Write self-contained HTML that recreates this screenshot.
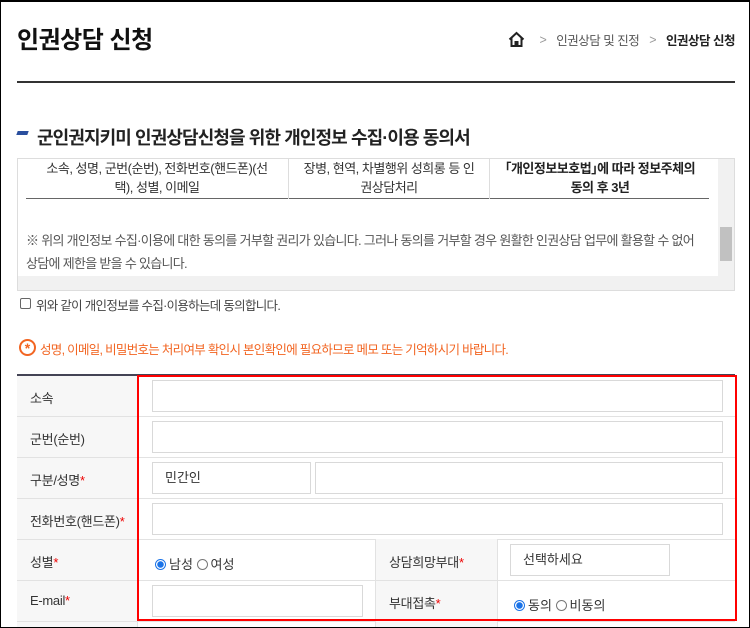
<!DOCTYPE html>
<html><head><meta charset="utf-8"><style>
*{margin:0;padding:0;box-sizing:border-box}
body{width:750px;height:628px;overflow:hidden;background:#fff;font-family:"Liberation Sans","Noto Sans CJK KR",sans-serif;color:#333;position:relative}
.a{position:absolute;white-space:nowrap}
.frame{position:absolute;left:0;top:0;width:750px;height:628px;border:1px solid #000;border-top-width:2px;pointer-events:none;z-index:9}
.inp{position:absolute;border:1px solid #d9d9d9;background:#fff;height:32px;font-size:13px;line-height:30px;padding-left:12px;color:#333}
.lab{position:absolute;left:30px;font-size:13px;color:#333;letter-spacing:-0.3px}
.req{color:#e00}
.row{position:absolute;left:17px;width:718px;border-bottom:1px solid #e2e2e2}
.rad{display:inline-block;width:11px;height:11px;border:1px solid #777;border-radius:50%;vertical-align:-1px;margin-right:3px;background:#fff}
.rad.on{border-color:#1a73e8;background:radial-gradient(circle,#1a73e8 0 3px,#fff 3.5px)}
.sc{letter-spacing:-0.5px}
</style></head><body>
<div class="frame"></div>
<div class="a" style="left:17px;top:20px;font-size:24px;font-weight:bold;color:#111;letter-spacing:-0.5px">인권상담 신청</div>
<div class="a" style="right:15px;top:30px;font-size:12.5px;letter-spacing:-0.5px;display:flex;align-items:center;gap:0">
<svg width="17" height="17" viewBox="0 0 17 17" style="margin-right:14px"><path d="M1.5 8.5 8.5 2l7 6.5M3.5 7v8h4v-4h2v4h4V7" fill="none" stroke="#222" stroke-width="2"/></svg>
<span style="color:#999;margin-right:10px">&gt;</span><span style="color:#555;margin-right:10px">인권상담 및 진정</span><span style="color:#999;margin-right:10px">&gt;</span><span style="color:#222;font-weight:bold">인권상담 신청</span></div>
<div class="a" style="left:17px;top:81px;width:718px;height:2px;background:#333"></div>

<div class="a" style="left:17px;top:131px;width:11px;height:4px;background:#2a4f9e;transform:skewX(-20deg)"></div>
<div class="a" style="left:37px;top:124px;font-size:18px;color:#222;font-weight:bold;letter-spacing:-0.9px">군인권지키미 인권상담신청을 위한 개인정보 수집·이용 동의서</div>

<div class="a sc" style="left:17px;top:158px;width:718px;height:133px;border:1px solid #ddd;overflow:hidden">
 <div class="a" style="left:8px;top:0;width:683px;height:40px;border-bottom:1px solid #666"></div>
 <div class="a" style="left:270px;top:0;width:1px;height:40px;background:#ddd"></div>
 <div class="a" style="left:471px;top:0;width:1px;height:40px;background:#ddd"></div>
 <div class="a" style="left:8px;top:0;width:262px;text-align:center;font-size:13px;line-height:19px;white-space:normal">소속, 성명, 군번(순번), 전화번호(핸드폰)(선<br>택), 성별, 이메일</div>
 <div class="a" style="left:271px;top:0;width:200px;text-align:center;font-size:13px;line-height:19px">장병, 현역, 차별행위 성희롱 등 인<br>권상담처리</div>
 <div class="a" style="left:472px;top:0;width:220px;text-align:center;font-size:13px;line-height:19px;font-weight:bold;color:#222">｢개인정보보호법｣에 따라 정보주체의<br>동의 후 3년</div>
 <div class="a" style="left:8px;top:70px;font-size:13px;line-height:23px;color:#555;letter-spacing:-0.7px">※ 위의 개인정보 수집·이용에 대한 동의를 거부할 권리가 있습니다. 그러나 동의를 거부할 경우 원활한 인권상담 업무에 활용할 수 없어<br>상담에 제한을 받을 수 있습니다.</div>
 <div class="a" style="left:700px;top:0;width:16px;height:117px;background:#f1f1f1"></div>
 <div class="a" style="left:702px;top:68px;width:12px;height:34px;background:#c1c1c1"></div>
 <div class="a" style="left:0;top:117px;width:716px;height:14px;background:#f1f1f1"></div>
</div>

<div class="a" style="left:20px;top:298px;width:11px;height:11px;border:1px solid #666;border-radius:2px"></div>
<div class="a" style="left:36px;top:295px;font-size:12.5px;color:#444;letter-spacing:-0.7px">위와 같이 개인정보를 수집·이용하는데 동의합니다.</div>

<div class="a" style="left:19px;top:339px;width:17px;height:17px;border:2px solid #f26522;border-radius:50%;color:#f26522;font-size:14px;font-weight:bold;line-height:14px;text-align:center">*</div>
<div class="a" style="left:40px;top:339px;font-size:12.5px;color:#f26522;letter-spacing:-0.7px">성명, 이메일, 비밀번호는 처리여부 확인시 본인확인에 필요하므로 메모 또는 기억하시기 바랍니다.</div>

<div class="a" style="left:17px;top:375px;width:120px;height:253px;background:#f7f7f7"></div>
<div class="a" style="left:17px;top:374px;width:718px;height:2px;background:#445"></div>
<div class="row" style="top:375px;height:42px"></div>
<div class="row" style="top:416px;height:42px"></div>
<div class="row" style="top:457px;height:42px"></div>
<div class="row" style="top:498px;height:42px"></div>
<div class="row" style="top:539px;height:42px"></div>
<div class="row" style="top:580px;height:42px"></div>
<div class="a" style="left:137px;top:375px;width:1px;height:253px;background:#e2e2e2"></div>
<div class="a" style="left:375px;top:539px;width:123px;height:89px;background:#f7f7f7;border-left:1px solid #e2e2e2;border-right:1px solid #e2e2e2"></div>
<div class="a" style="left:375px;top:580px;width:123px;height:1px;background:#e2e2e2"></div>

<div class="lab" style="top:388px">소속</div>
<div class="lab" style="top:429px">군번(순번)</div>
<div class="lab" style="top:470px">구분/성명<span class="req">*</span></div>
<div class="lab" style="top:511px">전화번호(핸드폰)<span class="req">*</span></div>
<div class="lab" style="top:552px">성별<span class="req">*</span></div>
<div class="lab" style="top:593px">E-mail<span class="req">*</span></div>
<div class="lab" style="left:389px;top:552px">상담희망부대<span class="req">*</span></div>
<div class="lab" style="left:389px;top:593px">부대접촉<span class="req">*</span></div>

<div class="inp" style="left:152px;top:380px;width:571px"></div>
<div class="inp" style="left:152px;top:421px;width:571px"></div>
<div class="inp" style="left:152px;top:462px;width:159px">민간인</div>
<div class="inp" style="left:315px;top:462px;width:408px"></div>
<div class="inp" style="left:152px;top:503px;width:571px"></div>
<div class="inp" style="left:510px;top:544px;width:160px">선택하세요</div>
<div class="inp" style="left:152px;top:585px;width:211px"></div>
<div class="a" style="left:155px;top:554px;font-size:13px"><span class="rad on"></span>남성 <span class="rad"></span>여성</div>
<div class="a" style="left:514px;top:595px;font-size:13px"><span class="rad on"></span>동의 <span class="rad"></span>비동의</div>

<div class="a" style="left:137px;top:375px;width:600px;height:246px;border:2px solid #f00"></div>
</body></html>
